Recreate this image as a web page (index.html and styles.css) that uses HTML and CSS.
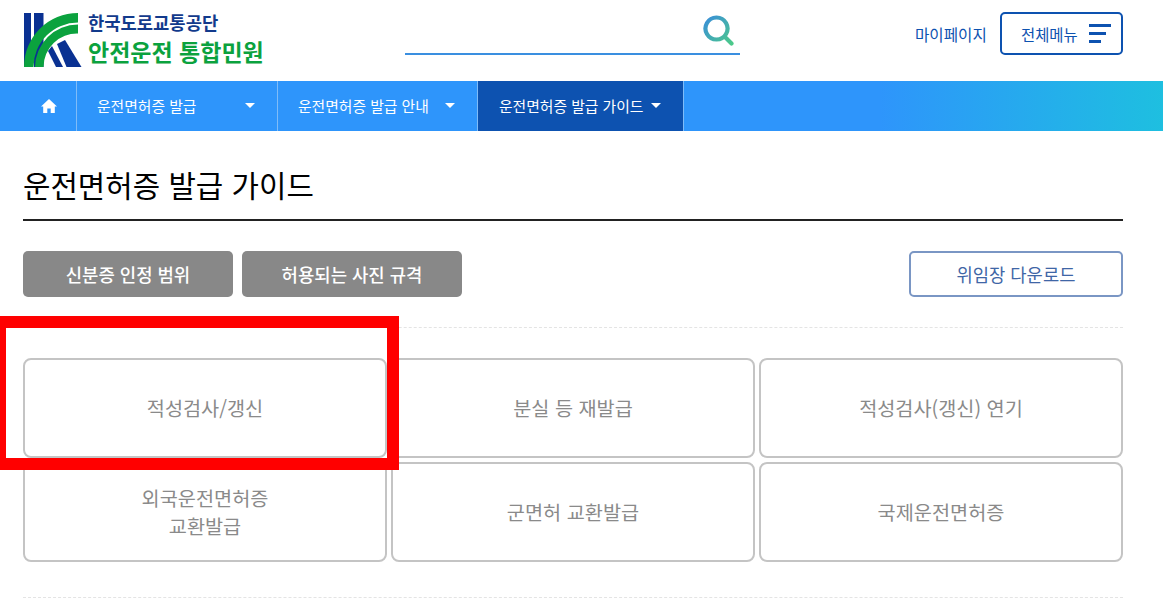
FILE: index.html
```html
<!DOCTYPE html>
<html lang="ko">
<head>
<meta charset="utf-8">
<title>운전면허증 발급 가이드</title>
<link rel="stylesheet" href="styles.css">
</head>
<body>
<header class="header">
  <a class="logo" href="#">
    <svg class="logo-mark" width="58" height="56" viewBox="24 12 58 56" aria-hidden="true">
      <rect x="24" y="13" width="7" height="54" fill="#0a3192"/>
      <rect x="34" y="13" width="9.5" height="54" fill="#0a3192"/>
      <polygon points="48,51 52,46 63,67 56,67" fill="#0a3192"/>
      <polygon points="57,44 65,40 81.5,67 66.5,67" fill="#0a3192"/>
      <path d="M24 67 A54 54 0 0 1 78 13 V22.5 A44.5 44.5 0 0 0 33.5 67 Z" fill="#0ba23e"/>
      <path d="M35 67 A43 43 0 0 1 78 24.5 V33.5 A33.5 33.5 0 0 0 43.5 67 Z" fill="#0ba23e"/>
    </svg>
    <span class="logo-text">
      <span class="logo-org">한국도로교통공단</span>
      <span class="logo-name">안전운전 통합민원</span>
    </span>
  </a>
  <div class="search">
    <svg width="32" height="33" viewBox="0 0 32 33" aria-hidden="true">
      <defs>
        <linearGradient id="sg" x1="0" y1="0" x2="1" y2="1">
          <stop offset="0" stop-color="#3a8fd8"/>
          <stop offset="1" stop-color="#4cc98a"/>
        </linearGradient>
      </defs>
      <path d="M13.5 2.5a11 11 0 1 0 0.01 0ZM21.5 21.5 L28.5 28.5" fill="none" stroke="url(#sg)" stroke-width="4.2" stroke-linecap="round"/>
    </svg>
  </div>
  <a class="mypage" href="#">마이페이지</a>
  <button class="allmenu" type="button">
    <span>전체메뉴</span>
    <span class="burger"><i class="b1"></i><i class="b2"></i><i class="b3"></i></span>
  </button>
</header>

<nav class="nav">
  <a class="nav-home" href="#">
    <svg width="16" height="14" viewBox="0 0 16 14" aria-hidden="true"><path d="M8 0 L16 7.4 H13.8 V14 H9.7 V9.4 H6.3 V14 H2.2 V7.4 H0 Z" fill="#fff"/></svg>
  </a>
  <a class="nav-item w1" href="#"><span>운전면허증 발급</span><i class="caret"></i></a>
  <a class="nav-item w2" href="#"><span>운전면허증 발급 안내</span><i class="caret"></i></a>
  <a class="nav-item w3 active" href="#"><span>운전면허증 발급 가이드</span><i class="caret"></i></a>
</nav>

<main class="main">
  <h1 class="title">운전면허증 발급 가이드</h1>
  <div class="actions">
    <a class="btn gray g1" href="#">신분증 인정 범위</a>
    <a class="btn gray g2" href="#">허용되는 사진 규격</a>
    <a class="btn outline" href="#">위임장 다운로드</a>
  </div>
  <div class="cards">
    <a class="card" href="#">적성검사/갱신</a>
    <a class="card" href="#">분실 등 재발급</a>
    <a class="card" href="#">적성검사(갱신) 연기</a>
    <a class="card" href="#">외국운전면허증<br>교환발급</a>
    <a class="card" href="#">군면허 교환발급</a>
    <a class="card" href="#">국제운전면허증</a>
  </div>
</main>
<div class="highlight"></div>
</body>
</html>
```

FILE: styles.css
```css
* { box-sizing: border-box; }
html, body { margin: 0; padding: 0; height: 613px; overflow: hidden; background: #fff; }
body {
  position: relative;
  font-family: "Noto Sans CJK KR", "Noto Sans", sans-serif;
  color: #000;
}
a { text-decoration: none; color: inherit; }

.header { height: 81px; display: flex; align-items: flex-start; padding: 0 40px 0 24px; }
.logo { display: flex; margin-top: 12px; width: 381px; flex: none; }
.logo-mark { display: block; flex: none; }
.logo-text { display: flex; flex-direction: column; margin-left: 6px; margin-top: -1px; }
.logo-org { font-size: 17.7px; line-height: 22px; font-weight: 700; color: #123a8c; }
.logo-name { font-size: 23px; line-height: 32px; font-weight: 700; color: #0ba23e; margin-top: 2px; }

.search {
  width: 335px; height: 55px; flex: none; margin-right: 175px;
  border-bottom: 2px solid #3a8fe0;
  display: flex; justify-content: flex-end; padding: 15px 5px 0 0;
}
.search svg { display: block; }
.mypage { flex: none; margin-top: 23px; font-size: 15.6px; line-height: 22px; color: #0d52b0; width: 85px; white-space: nowrap; }
.allmenu {
  flex: none; width: 123px; height: 43px; margin-top: 12px; padding: 0 10px 0 19px;
  display: flex; align-items: center; justify-content: space-between;
  background: #fff; border: 2px solid #0d52b0; border-radius: 5px;
  font: inherit; font-size: 15.4px; color: #0d52b0;
}
.burger { display: flex; flex-direction: column; gap: 5px; width: 22px; }
.burger i { display: block; height: 3px; background: #0d52b0; }
.b1 { width: 22px; } .b2 { width: 17px; } .b3 { width: 12px; }

.nav {
  height: 50px; display: flex; color: #fff;
  background: linear-gradient(90deg, #2e95fb 0, #2e95fb 880px, #1ebfe0 1163px);
}
.nav-home { width: 77px; border-right: 1px solid #7fbcf8; display: flex; align-items: center; justify-content: center; padding-left: 23px; padding-right: 1px; }
.nav-home svg { display: block; }
.nav-item {
  height: 50px; display: flex; align-items: center; justify-content: space-between;
  padding: 0 22px 0 20px; font-size: 14.8px; border-right: 1px solid #7fbcf8; white-space: nowrap;
}
.nav-item span { display: block; margin-top: -2px; }
.w1 { width: 201px; }
.w2 { width: 200px; }
.w3 { width: 206px; }
.active { background: #0d52b0; padding-left: 21px; }
.caret { display: block; width: 0; height: 0; border-style: solid; border-width: 5px 5px 0; border-color: #fff transparent transparent; margin-top: -1px; }

.main { width: 1100px; margin-left: 23px; }
.title { margin: 0; height: 90px; border-bottom: 2px solid #222; font-size: 29.8px; font-weight: 400; line-height: 44px; padding-top: 31px; }
.actions { display: flex; gap: 9px; padding: 30px 0; border-bottom: 1px dashed #e4e4e4; height: 107px; }
.btn { height: 46px; display: flex; align-items: center; justify-content: center; border-radius: 5px; white-space: nowrap; }
.gray { background: #888; color: #fff; font-size: 17.8px; font-weight: 500; }
.g1 { width: 210px; }
.g2 { width: 220px; }
.outline { width: 214px; margin-left: auto; border: 2px solid #7a96c4; font-size: 17.7px; color: #3f66a6; background: #fff; }

.cards {
  display: grid; grid-template-columns: repeat(3, 364px); grid-auto-rows: 100px;
  gap: 4px; padding: 30px 0 35px; border-bottom: 1px dashed #e4e4e4;
}
.card {
  display: flex; align-items: center; justify-content: center; text-align: center;
  border: 2px solid #c4c4c4; border-radius: 8px; background: #fff;
  font-size: 19.7px; line-height: 28px; color: #8a8a8a;
}

.highlight { position: absolute; left: -6px; top: 316px; width: 405px; height: 154px; border: 12px solid #f00; }
```
